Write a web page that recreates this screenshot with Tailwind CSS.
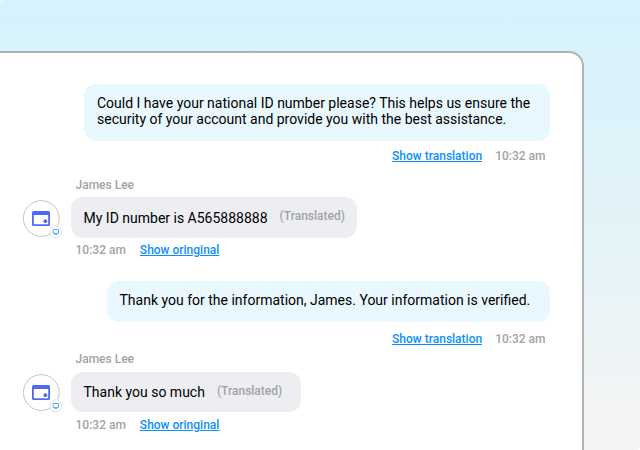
<!DOCTYPE html>
<html lang="en">
<head>
  <meta charset="UTF-8" />
  <meta name="viewport" content="width=device-width, initial-scale=1.0"/>
  <title>Chat</title>
  <script src="https://cdn.jsdelivr.net/npm/@tailwindcss/browser@4"></script>
</head>
<body class="bg-white">
  <div class="w-[640px] h-[450px] overflow-hidden rounded-tl-[3px] rounded-br-[3px] pt-[51px] bg-linear-to-b from-[#d7f2fc] from-5% via-[#e6f4f8] via-60% to-[#f5f4f4] to-97% font-[Roboto,sans-serif]">
    <div class="w-[584px] h-[420px] bg-white border-t-2 border-r-2 border-[#b2b2b2] rounded-tr-[15px] pt-[31px] pl-[23px] pr-8 flex flex-col">

      <!-- Agent message -->
      <div class="flex flex-col items-end">
        <div class="w-[466px] h-[57px] bg-[#e9f8fe] rounded-xl px-[13px] pt-[11px] text-[14px] leading-4 text-black whitespace-nowrap">
          Could I have your national ID number please? This helps us ensure the<br>
          security of your account and provide you with the best assistance.
        </div>
        <div class="flex gap-[13px] mt-[7px] mr-[4.5px] text-[12px] leading-4 font-medium">
          <a href="#" class="text-[#0c90fb] underline">Show translation</a>
          <span class="text-[#a3a3a3]">10:32 am</span>
        </div>
      </div>

      <!-- Customer message -->
      <div class="mt-[13px]">
        <div class="pl-[52.5px] text-[12px] leading-4 font-medium text-[#a3a3a3]">James Lee</div>
        <div class="flex items-center gap-[10.5px] mt-[4px]">
          <div class="relative size-[37px] shrink-0 top-px">
            <svg class="size-[37px]" viewBox="0 0 37 37" fill="none">
              <circle cx="18.3" cy="18.5" r="17.9" fill="#fff" stroke="#c4c4c4" />
              <rect x="9" y="11" width="18" height="15" rx="1.5" fill="#4f68f7" />
              <path d="M10.8 15h14.4v9.3H10.8z" fill="#fff" />
              <circle cx="22.4" cy="21.2" r="1.9" fill="#4f68f7" />
            </svg>
            <svg class="absolute left-[26px] top-[25px] size-[13px]" viewBox="0 0 13 13" fill="none">
              <circle cx="6.7" cy="6.7" r="5.9" fill="#fff" stroke="#e0e0e3" />
              <path d="M4.1 4.5h5.4v3.9H4.1zM5.3 9.3h3" stroke="#4db0fa" />
            </svg>
          </div>
          <div class="w-[286.5px] h-[41px] flex items-center bg-[#edeef2] rounded-xl pl-[13px] whitespace-nowrap">
            <span class="text-[14px] leading-4 text-black">My ID number is A565888888</span>
            <span class="ml-3 mb-[3px] text-[12px] leading-4 font-medium text-[#a3a3a3]">(Translated)</span>
          </div>
        </div>
        <div class="flex gap-[14px] mt-[4px] pl-[52.5px] text-[12px] leading-4 font-medium">
          <span class="text-[#a3a3a3]">10:32 am</span>
          <a href="#" class="text-[#0c90fb] underline">Show oringinal</a>
        </div>
      </div>

      <!-- Agent message -->
      <div class="flex flex-col items-end mt-[23px]">
        <div class="w-[443px] h-[41px] bg-[#e9f8fe] rounded-xl px-[12.5px] pt-[11px] text-[14px] leading-4 text-black whitespace-nowrap">
          Thank you for the information, James. Your information is verified.
        </div>
        <div class="flex gap-[13px] mt-[9px] mr-[4.5px] text-[12px] leading-4 font-medium">
          <a href="#" class="text-[#0c90fb] underline">Show translation</a>
          <span class="text-[#a3a3a3]">10:32 am</span>
        </div>
      </div>

      <!-- Customer message -->
      <div class="mt-[4px]">
        <div class="pl-[52.5px] text-[12px] leading-4 font-medium text-[#a3a3a3]">James Lee</div>
        <div class="flex items-center gap-[10.5px] mt-[5px]">
          <div class="relative size-[37px] shrink-0 top-[0.5px]">
            <svg class="size-[37px]" viewBox="0 0 37 37" fill="none">
              <circle cx="18.3" cy="18.5" r="17.9" fill="#fff" stroke="#c4c4c4" />
              <rect x="9" y="11" width="18" height="15" rx="1.5" fill="#4f68f7" />
              <path d="M10.8 15h14.4v9.3H10.8z" fill="#fff" />
              <circle cx="22.4" cy="21.2" r="1.9" fill="#4f68f7" />
            </svg>
            <svg class="absolute left-[26px] top-[25px] size-[13px]" viewBox="0 0 13 13" fill="none">
              <circle cx="6.7" cy="6.7" r="5.9" fill="#fff" stroke="#e0e0e3" />
              <path d="M4.1 4.5h5.4v3.9H4.1zM5.3 9.3h3" stroke="#4db0fa" />
            </svg>
          </div>
          <div class="w-[230.5px] h-[40px] flex items-center bg-[#edeef2] rounded-xl pl-[13px] whitespace-nowrap">
            <span class="text-[14px] leading-4 text-black">Thank you so much</span>
            <span class="ml-3 mb-[3px] text-[12px] leading-4 font-medium text-[#a3a3a3]">(Translated)</span>
          </div>
        </div>
        <div class="flex gap-[14px] mt-[5px] pl-[52.5px] text-[12px] leading-4 font-medium">
          <span class="text-[#a3a3a3]">10:32 am</span>
          <a href="#" class="text-[#0c90fb] underline">Show oringinal</a>
        </div>
      </div>

    </div>
  </div>
</body>
</html>
